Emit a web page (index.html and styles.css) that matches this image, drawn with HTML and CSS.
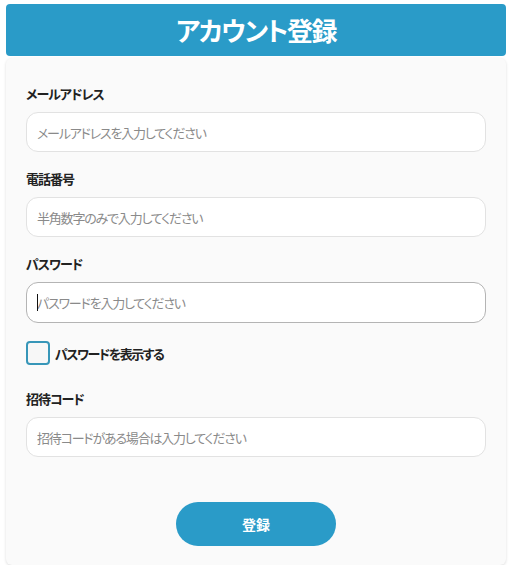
FILE: index.html
```html
<!DOCTYPE html>
<html lang="ja">
<head>
<meta charset="utf-8">
<link rel="stylesheet" href="styles.css">
</head>
<body>
<div class="wrap">
  <header class="header"><h1>アカウント登録</h1></header>
  <form class="card">
    <div class="field">
      <label class="label">メールアドレス</label>
      <input class="input" type="text" placeholder="メールアドレスを入力してください">
    </div>
    <div class="field">
      <label class="label">電話番号</label>
      <input class="input" type="text" placeholder="半角数字のみで入力してください">
    </div>
    <div class="field">
      <label class="label">パスワード</label>
      <div class="input-wrap">
        <input class="input active" type="password" placeholder="パスワードを入力してください">
        <span class="caret"></span>
      </div>
    </div>
    <label class="check">
      <span class="box"></span>
      <span class="check-text">パスワードを表示する</span>
    </label>
    <div class="field invite">
      <label class="label">招待コード</label>
      <input class="input" type="text" placeholder="招待コードがある場合は入力してください">
    </div>
    <div class="actions">
      <button type="button" class="btn">登録</button>
    </div>
  </form>
</div>
</body>
</html>
```
FILE: styles.css
```css
* { box-sizing: border-box; }
html, body { margin: 0; padding: 0; background: #ffffff; }
body {
  font-family: "Noto Sans CJK JP", "Noto Sans", sans-serif;
  font-feature-settings: "palt";
  color: #222;
}
.wrap {
  width: 500px;
  margin: 4px 0 0 6px;
}
.header {
  height: 52px;
  background: #2a9bc8;
  border-radius: 4px;
  display: flex;
  align-items: center;
  justify-content: center;
}
.header h1 {
  margin: 0;
  color: #fff;
  font-size: 26px;
  font-weight: 700;
  line-height: 1;
  letter-spacing: -1.5px;
}
.card {
  margin-top: 2px;
  background: #fafafa;
  border-radius: 6px;
  box-shadow: 0 1px 3px rgba(0,0,0,0.14);
  padding: 27px 20px 19px 20px;
  display: flex;
  flex-direction: column;
}
.field { display: flex; flex-direction: column; }
.field + .field { margin-top: 18px; }
.label {
  font-size: 13px;
  font-weight: 700;
  line-height: 17px;
  margin-bottom: 10px;
  color: #222;
  letter-spacing: -1px;
}
.input-wrap { position: relative; }
.input {
  width: 100%;
  height: 40px;
  border: 1px solid #e2e2e2;
  border-radius: 12px;
  background: #fff;
  padding: 0 10px;
  font-family: inherit;
  font-feature-settings: "palt";
  font-size: 13px;
  letter-spacing: -1.2px;
  color: #333;
  outline: none;
}
.input.active { border-color: #b4b4b4; height: 41px; }
.input::placeholder { color: #8a8a8a; }
.caret {
  position: absolute;
  left: 11px;
  top: 12px;
  width: 1px;
  height: 17px;
  background: #111;
}
.check {
  display: flex;
  align-items: center;
  gap: 5px;
  margin-top: 18px;
  height: 24px;
}
.box {
  width: 24px;
  height: 24px;
  border: 2px solid #3796b8;
  border-radius: 4px;
  background: #f7f7f7;
}
.check-text {
  font-size: 13px;
  font-weight: 700;
  color: #222;
  letter-spacing: -1.5px;
}
.field.invite { margin-top: 25px; }
.actions {
  display: flex;
  justify-content: center;
  margin-top: 45px;
}
.btn {
  width: 160px;
  height: 44px;
  border: none;
  border-radius: 22px;
  background: #2a9bc8;
  color: #fff;
  font-family: inherit;
  font-size: 14px;
  font-weight: 700;
}
```
